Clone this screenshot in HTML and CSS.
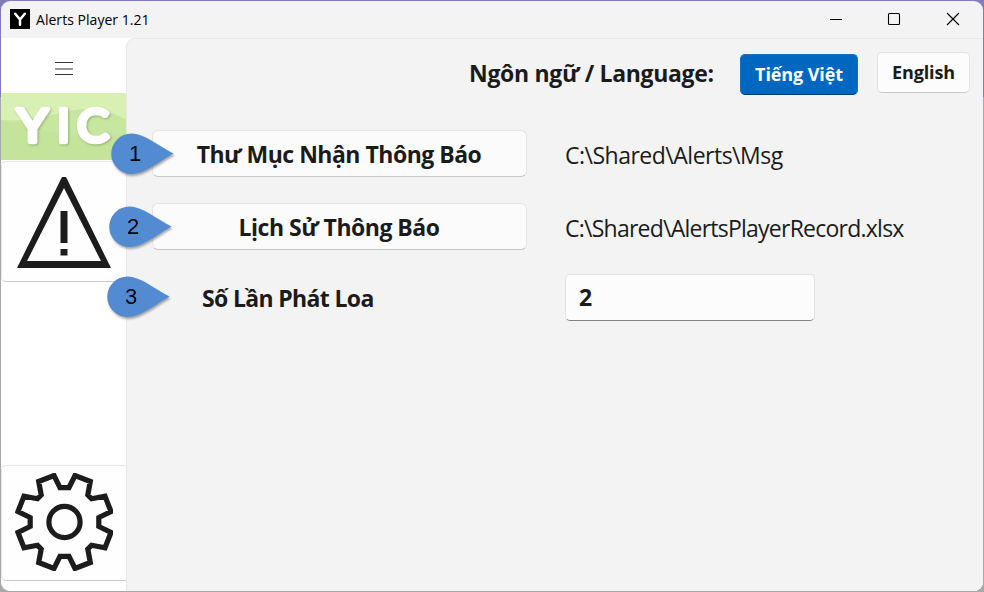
FILE: index.html
```html
<!DOCTYPE html>
<html lang="vi">
<head>
<meta charset="utf-8">
<title>Alerts Player 1.21</title>
<link rel="stylesheet" href="styles.css">
</head>
<body>
<div class="window">
  <header class="titlebar">
    <svg class="app-icon" viewBox="0 0 20 20"><path fill="#000" d="M0 0h20v20H0z"/><path d="M5.2 4.8 10 10.5l4.8-5.7M10 10.5v5.2" fill="none" stroke="#fff" stroke-width="2.5" stroke-linecap="round"/></svg>
    <span class="title">Alerts Player 1.21</span>
    <div class="controls">
      <svg viewBox="0 0 14 14"><path d="M1 7.5h12"/></svg>
      <svg viewBox="0 0 14 14"><rect x="1.5" y="1.5" width="11" height="11" rx="1"/></svg>
      <svg viewBox="0 0 14 14"><path d="m1 1 12 12M13 1 1 13"/></svg>
    </div>
  </header>
  <div class="body">
    <nav class="sidebar">
      <button class="menu"><svg width="20" height="16" viewBox="0 0 20 16"><path d="M1 2.5h18M1 9h18M1 14.5h18" stroke="#333" fill="none"/></svg></button>
      <svg class="logo" viewBox="0 0 126 67">
        <rect width="126" height="67" fill="#c7e69f"/>
        <path d="M0 0h126v27C108 17 88 14 68 18 42 24 24 29 0 27z" fill="#d9f0b4"/>
        <path d="M0 67V27c35 9 80 22 126 14v26z" fill="#c2e297" opacity=".5"/>
        <g class="logo-text"><text x="31.5" y="49" textLength="31" lengthAdjust="spacingAndGlyphs">Y</text><text x="62.5" y="49">I</text><text x="92" y="49" textLength="32" lengthAdjust="spacingAndGlyphs">C</text></g>
      </svg>
      <button class="card alert"><svg width="94" height="92" viewBox="0 0 94 92"><path fill="#1c1c1c" fill-rule="evenodd" d="M45 0h4l45 91H0zM47 11 10 84h74zM43.5 34h7v32h-7zM43.5 72h7v6.5h-7z"/></svg></button>
      <button class="card settings"><svg width="98" height="98" viewBox="-49.5 -49 98 98"><g fill="none" stroke="#1c1c1c" stroke-width="5.2"><circle r="15.6"/><path d="M4.5-34.3 10.5-46.5 25.8-40.5 23.3-27 27-23.3 40.5-25.8 46.5-10.5 34.3-4.5V4.5L46.5 10.5 40.5 25.8 27 23.3 23.3 27 25.8 40.5 10.5 46.5 4.5 34.3H-4.5L-10.5 46.5-25.8 40.5-23.3 27-27 23.3-40.5 25.8-46.5 10.5-34.3 4.5V-4.5L-46.5-10.5-40.5-25.8-27-23.3-23.3-27-25.8-40.5-10.5-46.5-4.5-34.3z"/></g></svg></button>
    </nav>
    <main class="content">
      <div class="language">
        <span class="language-label">Ngôn ngữ / Language:</span>
        <button class="lang active"><span>Tiếng Việt</span></button>
        <button class="lang english"><span>English</span></button>
      </div>
      <div class="settings-grid">
        <button class="wide"><span class="folder">Thư Mục Nhận Thông Báo</span></button>
        <span class="path path-msg">C:\Shared\Alerts\Msg</span>
        <button class="wide"><span class="history">Lịch Sử Thông Báo</span></button>
        <span class="path path-record">C:\Shared\AlertsPlayerRecord.xlsx</span>
        <span class="repeat">Số Lần Phát Loa</span>
        <div class="field">2</div>
      </div>
    </main>
  </div>
</div>
<svg class="marker first" viewBox="0 0 64 42"><path d="M20.5.5C33 .5 46 12 62.5 20.5 46 30 33 41 20.5 41a20.2 20.2 0 0 1 0-40.5z"/><text x="24" y="28">1</text></svg>
<svg class="marker second" viewBox="0 0 64 42"><path d="M20.5.5C33 .5 46 12 62.5 20.5 46 30 33 41 20.5 41a20.2 20.2 0 0 1 0-40.5z"/><text x="24" y="28">2</text></svg>
<svg class="marker third" viewBox="0 0 64 42"><path d="M20.5.5C33 .5 46 12 62.5 20.5 46 30 33 41 20.5 41a20.2 20.2 0 0 1 0-40.5z"/><text x="24" y="28">3</text></svg>
</body>
</html>
```
FILE: styles.css
```css
* { box-sizing: border-box; }
body {
  margin: 0;
  padding: 1px;
  width: 984px;
  height: 592px;
  overflow: hidden;
  background: linear-gradient(#7f7bbd 0 97px, #a8a8a8 97px);
  font-family: "Open Sans", "Noto Sans", sans-serif;
  color: #1b1b1b;
}
button { font: inherit; color: inherit; padding: 0; margin: 0; border: 0; background: none; }
svg { display: block; flex: none; }
span { white-space: nowrap; }
.window { width: 982px; height: 590px; border-radius: 9px; background: #f3f3f3; overflow: hidden; }
.titlebar { height: 37px; display: flex; align-items: center; padding: 0 16px 1px 9px; }
.app-icon { width: 20px; height: 20px; }
.title { margin-left: 6px; font-size: 14px; letter-spacing: .04px; color: #000; }
.controls { margin-left: auto; display: flex; gap: 44.5px; padding-right: 7px; }
.controls svg { width: 14px; height: 14px; fill: none; stroke: #000; stroke-width: 1.1; }
.controls svg:nth-child(2) { margin: 0 1px 0 -1px; }
.body { height: 553px; display: flex; background: #fff; }
.sidebar { width: 125px; display: flex; flex-direction: column; }
.menu { height: 55px; display: flex; justify-content: center; padding-top: 22px; }
.logo { width: 126px; height: 67px; }
.logo-text { font: 400 46px Lato, sans-serif; text-anchor: middle; fill: #fff; stroke: #fff; stroke-width: 4.6; stroke-linejoin: round; filter: drop-shadow(1px 1.5px 1px #71905499); }
.card { border: 1px solid #e6e6e6; border-right: 0; border-bottom-color: #c9c9c9; border-radius: 5px 0 0 5px; background: #fefefe; display: flex; }
.alert { height: 121px; padding: 15px 0 0 15px; margin-top: 1px; }
.settings { height: 116px; margin-top: auto; margin-bottom: 10px; padding: 7px 0 0 13px; }
.content { flex: 1; background: #f3f3f3; border: 1px solid #e8e8e8; border-width: 1px 0 0 1px; border-top-left-radius: 9px; }
.language { height: 90px; padding: 14px 13px 0 0; display: flex; justify-content: flex-end; font-weight: 700; }
.language-label { width: 245px; margin-right: 26px; margin-top: 4px; font-size: 23px; line-height: 32px; letter-spacing: -.32px; }
.lang { display: flex; align-items: center; justify-content: center; border: 1px solid #e2e2e2; border-bottom-color: #c8c8c8; border-radius: 5px; background: #fcfcfc; font-size: 18px; padding-bottom: 2px; letter-spacing: -.1px; }
.active { width: 118px; height: 41px; margin-top: 1px; color: #fff; background: #0067c0; border-color: #1473c5; border-bottom-color: #003f75; }
.english { width: 93px; height: 41px; margin: -1px 0 0 19px; }
.settings-grid { display: grid; grid-template-columns: 375px 360px; grid-template-rows: 48px 48px 48px; row-gap: 25px; column-gap: 38px; margin-left: 25px; font-size: 23px; align-items: center; }
.wide { height: 47px; display: flex; align-items: center; justify-content: center; font-weight: 700; border: 1px solid #e5e5e5; border-bottom-color: #c8c8c8; border-radius: 6px; background: #fbfbfb; letter-spacing: -.5px; padding: 1px 1px 0 0; }
.path { padding-top: 3px; }
.path-msg { letter-spacing: -.5px; }
.path-record { letter-spacing: -.76px; }
.repeat { font-weight: 700; padding: 0 0 2px 50px; letter-spacing: -.65px; }
.field { width: 250px; height: 47px; margin-top: -4px; padding: 6px 13px; line-height: 32px; font-weight: 700; border: 1px solid #e2e2e2; border-bottom-color: #828282; border-radius: 5px; background: #fcfcfc; }
.marker { position: absolute; width: 64px; height: 42px; overflow: visible; filter: drop-shadow(1px 2px 1px #0005); }
.marker path { fill: #528bd2; }
.marker text { font: 22px "Liberation Sans", sans-serif; text-anchor: middle; fill: #000; }
.first { left: 110.5px; top: 133px; }
.second { left: 108.5px; top: 206px; }
.third { left: 106.5px; top: 276px; }
```
